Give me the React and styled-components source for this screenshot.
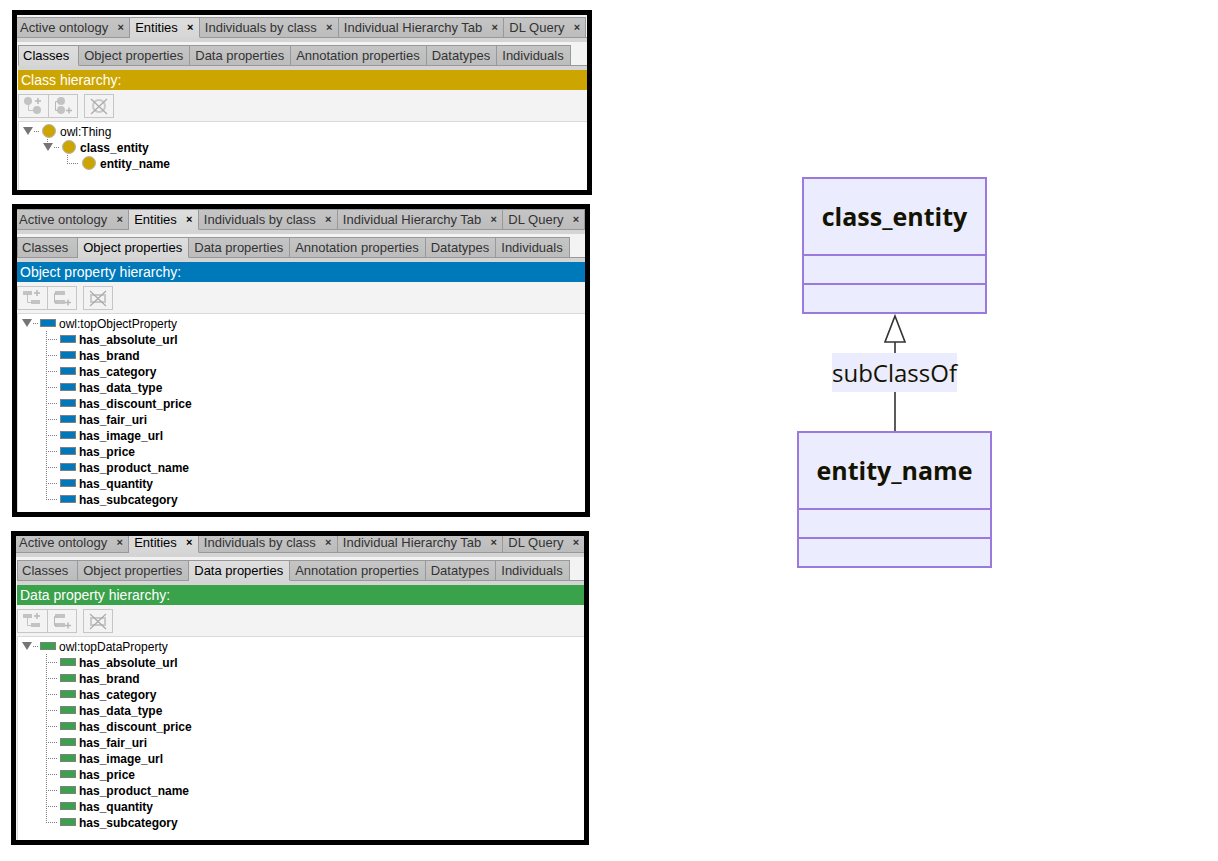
import React, { useState } from "react";
import styled, { createGlobalStyle, css } from "styled-components";

const GlobalStyle = createGlobalStyle`
  * { box-sizing: border-box; }
  body {
    margin: 0;
    background: #ffffff;
    color: #000000;
    font-family: "Liberation Sans", Arial, sans-serif;
  }
  button { font: inherit; color: inherit; }
`;

const Page = styled.main`
  display: flex;
  align-items: flex-start;
`;

const PanelColumn = styled.div`
  flex: none;
  display: flex;
  flex-direction: column;
  width: calc(50% - 17px);
  min-width: 592px;
  padding: 10px 0 16px 11px;
`;

const Panel = styled.section`
  margin: ${(p) => p.$margin};
  padding-top: ${(p) => (p.$roomy ? 2 : 0)}px;
  border: 5px solid #000000;
  background: #f3f3f3;
  overflow: hidden;
`;

const PanelBody = styled.div`
  margin-left: ${(p) => (p.$flush ? 0 : 1)}px;
`;

const TabStrip = styled.div`
  display: flex;
  align-items: flex-end;
  height: ${(p) => (p.$clipped ? 17 : 21)}px;
  background: linear-gradient(#999999, #999999) bottom / 100% 1px no-repeat;
`;

const ViewStrip = styled(TabStrip)`
  margin-left: ${(p) => (p.$flush ? -3 : -2)}px;
`;

const StripBase = styled.div`
  height: ${(p) => p.$size}px;
  background: #d4d4d4;
`;

const StripGap = styled.div`
  height: 3px;
`;

const tabSurface = css`
  flex: none;
  height: 21px;
  border: solid #999999;
  border-width: 1px 1px 1px 0;
  background: linear-gradient(#c5c5c5, #bcbcbc);
  color: #333333;
  font-size: 13px;
  line-height: 19px;
  white-space: nowrap;
  ${(p) =>
    p.$active &&
    css`
      border-bottom-color: #d6d6d6;
      background: linear-gradient(#dedede, #d6d6d6);
      color: #000000;
    `}
`;

const ViewTab = styled.div`
  ${tabSurface}
  display: flex;
  gap: 9px;
  padding: 0 5px;
`;

const PlainButton = styled.button`
  padding: 0;
  border: 0;
  background: none;
`;

const CloseButton = styled(PlainButton)`
  width: 7px;
  font-size: 11px;
  font-weight: bold;
  line-height: 19px;
`;

const EntityTab = styled.button`
  ${tabSurface}
  padding: 0 6px 0 5px;
  &:first-child {
    padding: 0 9px 0 4px;
    border-left-width: 1px;
  }
`;

const Title = styled.h2`
  margin: 0;
  padding-left: 3px;
  height: 20px;
  background: ${(p) => p.$color};
  color: #ffffff;
  font-size: 14px;
  font-weight: normal;
  line-height: 20px;
`;

const Toolbar = styled.div`
  display: flex;
  height: 32px;
  padding: 4px 0;
  border-bottom: 1px solid #d9d9d9;
`;

const ToolButton = styled.button`
  width: 30px;
  height: 24px;
  padding: 0;
  border: 1px solid #c6c6c6;
  background: #f3f3f3;
  &:first-child { border-right: 0; }
  &:last-child { margin-left: 6px; }
  svg { display: block; }
`;

const Tree = styled.ul`
  margin: 0;
  padding: 1px 0 ${(p) => p.$bottom}px 4px;
  border-left: 1px solid #d9d9d9;
  background: #ffffff;
  list-style: none;
`;

const TreeRow = styled.li`
  display: flex;
  align-items: center;
  height: 16px;
  padding-left: ${(p) => p.$depth * 20}px;
  font-size: 12px;
  font-weight: ${(p) => (p.$depth ? "bold" : "normal")};
  svg { display: block; }
`;

const RowLabel = styled.span`
  padding-top: 2px;
  line-height: 14px;
`;

const Marker = styled.span`
  display: flex;
  justify-content: center;
  width: 16px;
  margin-right: 3px;
`;

const Dot = styled.span`
  width: 14px;
  height: 14px;
  border: 1px solid #b4b4b4;
  border-radius: 50%;
  background: ${(p) => p.$color};
`;

const Bar = styled.span`
  width: 16px;
  height: 8px;
  border: 1px solid #808080;
  background: ${(p) => p.$color};
`;

const Diagram = styled.section`
  flex: 1;
  display: flex;
  flex-direction: column;
  align-items: center;
  padding: 177px 21px 0 0;
  color: #131300;
  font-family: "Open Sans", "Noto Sans", sans-serif;
  svg { display: block; }
`;

const ClassBox = styled.div`
  border: 2px solid #9b7ade;
  background: #ececff;
`;

const ClassName = styled.h3`
  margin: 0;
  padding: 0 18px;
  height: 75px;
  font-size: 25px;
  font-weight: 700;
  line-height: 75px;
`;

const Compartment = styled.div`
  height: 29px;
  border-top: 2px solid #9b7ade;
`;

const EdgeLabel = styled.span`
  height: 39px;
  background: #ececff;
  font-size: 24px;
  line-height: 39px;
`;

const dots = {
  stroke: "#808080",
  strokeDasharray: "1 1",
  fill: "none",
  shapeRendering: "crispEdges",
};

function Expander({ name, nested }) {
  return (
    <PlainButton type="button" aria-label={`Collapse ${name}`}>
      <svg width="18" height="16">
        <path d="M0 4H10L5 12Z" fill="#757575" />
        <path d="M11 8.5H17" {...dots} />
        {nested && <path d="M4.5 0V4" {...dots} />}
      </svg>
    </PlainButton>
  );
}

function Branch({ last }) {
  return (
    <svg width="18" height="16" aria-hidden="true">
      <path d={last ? "M4.5 0V9" : "M4.5 0V16"} {...dots} />
      <path d="M4 8.5H16" {...dots} />
    </svg>
  );
}

function AddChildIcon({ round }) {
  return (
    <svg width="28" height="22" fill="#c3c3c3" stroke="none">
      {round ? (
        <>
          <circle cx="9" cy="6" r="4" />
          <circle cx="18" cy="15" r="4" />
          <path d="M9.5 6V15.5H15" stroke="#c3c3c3" fill="none" />
        </>
      ) : (
        <>
          <path d="M5 4H14V8H5ZM13 13H22V17H13Z" />
          <path d="M9.5 8V15.5H13" stroke="#c3c3c3" fill="none" />
        </>
      )}
      <path d="M16 6H22M19 3V9" stroke="#b8b8b8" strokeWidth="1.5" />
    </svg>
  );
}

function AddSiblingIcon({ round }) {
  return (
    <svg width="28" height="22" fill="#c3c3c3" stroke="none">
      {round ? (
        <>
          <circle cx="12" cy="6" r="4" />
          <circle cx="12" cy="15" r="4" />
        </>
      ) : (
        <path d="M7 4H17V8H7ZM7 13H17V17H7Z" />
      )}
      <path d="M9 6.5H6.5V15.5H9" stroke="#b8b8b8" fill="none" />
      <path d="M17 15.5H23M20 12.5V18.5" stroke="#b8b8b8" strokeWidth="1.5" />
    </svg>
  );
}

function DeleteIcon({ round }) {
  return (
    <svg width="28" height="22" fill="none">
      {round ? (
        <circle cx="14" cy="11" r="6" stroke="#c8c8c8" strokeWidth="2" />
      ) : (
        <path d="M7 8H21V15H7Z" stroke="#c8c8c8" strokeWidth="2" />
      )}
      <path d="M6 4L22 19M22 4L6 19" stroke="#aaaaaa" strokeWidth="1.2" />
    </svg>
  );
}

const VIEWS = [
  "Active ontology",
  "Entities",
  "Individuals by class",
  "Individual Hierarchy Tab",
  "DL Query",
];

const ENTITY_TABS = [
  "Classes",
  "Object properties",
  "Data properties",
  "Annotation properties",
  "Datatypes",
  "Individuals",
];

const PROPERTIES = [
  "has_absolute_url",
  "has_brand",
  "has_category",
  "has_data_type",
  "has_discount_price",
  "has_fair_uri",
  "has_image_url",
  "has_price",
  "has_product_name",
  "has_quantity",
  "has_subcategory",
];

const propertyTree = (root) => [
  { name: root, depth: 0, open: true },
  ...PROPERTIES.map((name, i) => ({
    name,
    depth: 1,
    last: i === PROPERTIES.length - 1,
  })),
];

const CLASS_TREE = [
  { name: "owl:Thing", depth: 0, open: true },
  { name: "class_entity", depth: 1, open: true },
  { name: "entity_name", depth: 2, last: true },
];

function HierarchyPanel({ title, color, tab, rows, round, roomy, flush, clipped, margin, bottom }) {
  const [activeTab, setActiveTab] = useState(tab);
  return (
    <Panel $margin={margin} $roomy={roomy}>
      <ViewStrip $flush={flush} $clipped={clipped}>
        {VIEWS.map((view) => (
          <ViewTab key={view} $active={view === "Entities"}>
            <PlainButton type="button">{view}</PlainButton>
            <CloseButton type="button" aria-label={`Close ${view}`}>×</CloseButton>
          </ViewTab>
        ))}
      </ViewStrip>
      <StripBase $size={4} />
      <StripGap />
      <PanelBody $flush={flush}>
        <TabStrip>
          {ENTITY_TABS.map((name) => (
            <EntityTab
              key={name}
              type="button"
              $active={name === activeTab}
              onClick={() => setActiveTab(name)}
            >
              {name}
            </EntityTab>
          ))}
        </TabStrip>
        <StripBase $size={4} />
        <Title $color={color}>{title}</Title>
        <Toolbar>
          <ToolButton type="button" aria-label="Add child"><AddChildIcon round={round} /></ToolButton>
          <ToolButton type="button" aria-label="Add sibling"><AddSiblingIcon round={round} /></ToolButton>
          <ToolButton type="button" aria-label="Delete"><DeleteIcon round={round} /></ToolButton>
        </Toolbar>
        <Tree $bottom={bottom}>
          {rows.map((row) => (
            <TreeRow key={row.name} $depth={row.depth}>
              {row.open ? (
                <Expander name={row.name} nested={row.depth > 0} />
              ) : (
                <Branch last={row.last} />
              )}
              <Marker>{round ? <Dot $color={color} /> : <Bar $color={color} />}</Marker>
              <RowLabel>{row.name}</RowLabel>
            </TreeRow>
          ))}
        </Tree>
      </PanelBody>
    </Panel>
  );
}

function UmlClass({ name }) {
  return (
    <ClassBox>
      <ClassName>{name}</ClassName>
      <Compartment />
      <Compartment />
    </ClassBox>
  );
}

export default function App() {
  return (
    <Page>
      <GlobalStyle />
      <PanelColumn>
        <HierarchyPanel
          title="Class hierarchy:"
          color="#cda500"
          tab="Classes"
          rows={CLASS_TREE}
          margin="0 0 9px 1px"
          bottom={19}
          round
          roomy
        />
        <HierarchyPanel
          title="Object property hierarchy:"
          color="#0079ba"
          tab="Object properties"
          rows={propertyTree("owl:topObjectProperty")}
          margin="0 2px 14px 1px"
          bottom={5}
          flush
        />
        <HierarchyPanel
          title="Data property hierarchy:"
          color="#3aa24b"
          tab="Data properties"
          rows={propertyTree("owl:topDataProperty")}
          margin="0 3px 0 0"
          bottom={10}
          clipped
        />
      </PanelColumn>
      <Diagram>
        <UmlClass name="class_entity" />
        <svg width="22" height="39" fill="none" stroke="#333333" strokeWidth="1.6">
          <path d="M11 2L21 28H1ZM11 28V39" />
        </svg>
        <EdgeLabel>subClassOf</EdgeLabel>
        <svg width="22" height="39" stroke="#333333" strokeWidth="1.6">
          <path d="M11 0V39" />
        </svg>
        <UmlClass name="entity_name" />
      </Diagram>
    </Page>
  );
}
